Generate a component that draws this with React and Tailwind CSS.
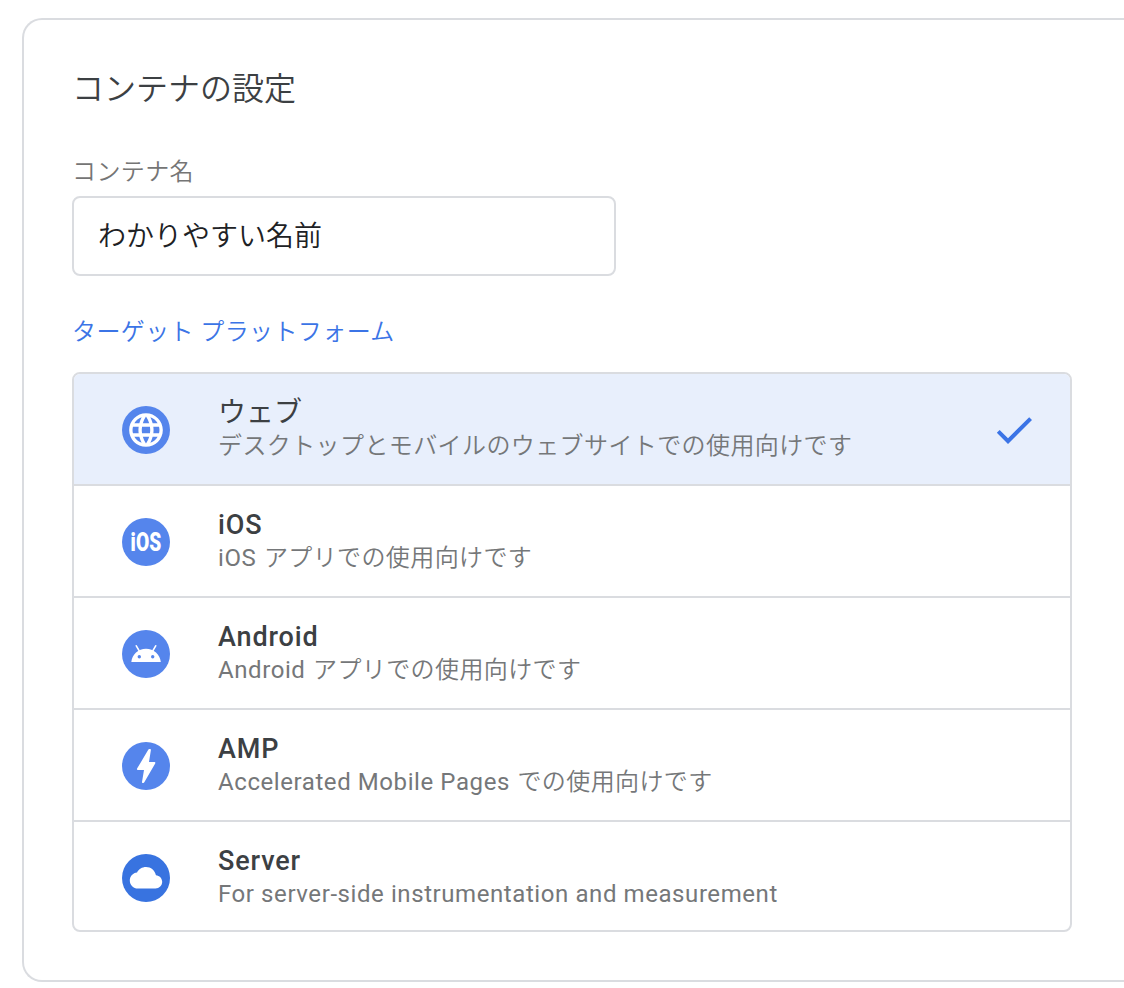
const FONT = 'font-[Roboto,"Noto_Sans_CJK_JP",sans-serif]';

function Disc({ color = 'fill-[#5585ec]', children }) {
  return (
    <svg viewBox="0 0 48 48" className="size-12 shrink-0">
      <circle cx="24" cy="24" r="24" className={color} />
      <g fill="#fff">{children}</g>
    </svg>
  );
}

const WebIcon = () => (
  <Disc>
    <path
      transform="translate(3.8 3.8) scale(1.683)"
      d="M11.99 2C6.47 2 2 6.48 2 12s4.47 10 9.99 10C17.52 22 22 17.52 22 12S17.52 2 11.99 2zm6.93 6h-2.95c-.32-1.25-.78-2.45-1.38-3.56 1.84.63 3.37 1.91 4.33 3.56zM12 4.04c.83 1.2 1.48 2.53 1.91 3.96h-3.82c.43-1.43 1.08-2.76 1.91-3.96zM4.26 14C4.1 13.36 4 12.69 4 12s.1-1.36.26-2h3.38c-.08.66-.14 1.32-.14 2s.06 1.34.14 2H4.26zm.82 2h2.95c.32 1.25.78 2.45 1.38 3.56-1.84-.63-3.37-1.9-4.33-3.56zm2.95-8H5.08c.96-1.66 2.49-2.93 4.33-3.56C8.81 5.55 8.35 6.75 8.03 8zM12 19.96c-.83-1.2-1.48-2.53-1.91-3.96h3.82c-.43 1.43-1.08 2.76-1.91 3.96zM14.34 14H9.66c-.09-.66-.16-1.32-.16-2s.07-1.35.16-2h4.68c.09.65.16 1.32.16 2s-.07 1.34-.16 2zm.25 5.56c.6-1.11 1.06-2.31 1.38-3.56h2.95c-.96 1.65-2.49 2.93-4.33 3.56zM16.36 14c.08-.66.14-1.32.14-2s-.06-1.34-.14-2h3.38c.16.64.26 1.31.26 2s-.1 1.36-.26 2h-3.38z"
    />
  </Disc>
);

const IosIcon = () => (
  <Disc>
    <text x="8.6" y="33" fontFamily="Roboto" fontWeight="900" fontSize="25" textLength="30.6" lengthAdjust="spacingAndGlyphs">
      iOS
    </text>
  </Disc>
);

const AndroidIcon = () => (
  <Disc>
    <path d="M9.300 32C10 24.500 16.300 18.700 24 18.700S38 24.500 38.800 32z" />
    <path d="M14.300 15.800l3.200 5.500M33.700 15.800l-3.200 5.500" stroke="#fff" strokeWidth="1.600" strokeLinecap="round" />
    <circle cx="17.300" cy="26.700" r="1.700" className="fill-[#5585ec]" />
    <circle cx="30.700" cy="26.700" r="1.700" className="fill-[#5585ec]" />
  </Disc>
);

const AmpIcon = () => (
  <Disc>
    <path d="M27.3 7h.8q.9 0 .8 1L27 20.1h5.6q1.1.2.6 1.300L22.300 40.300q-.4.7-1 .7h-.7q-.7-.1-.6-1L22 28h-6.200q-1.300-.2-.7-1.400L26.400 7.600q.3-.6.9-.6z" />
  </Disc>
);

const ServerIcon = () => (
  <Disc color="fill-[#3873e0]">
    <path
      transform="translate(7.8 7.6) scale(1.35)"
      d="M19.35 10.04C18.67 6.59 15.64 4 12 4 9.11 4 6.6 5.64 5.35 8.04 2.34 8.36 0 10.91 0 14c0 3.310 2.690 6 6 6h13c2.760 0 5-2.240 5-5 0-2.640-2.050-4.780-4.650-4.960z"
    />
  </Disc>
);

const PLATFORMS = [
  { name: 'ウェブ', jp: true, icon: WebIcon, selected: true, parts: ['', 'デスクトップとモバイルのウェブサイトでの使用向けです'] },
  { name: 'iOS', icon: IosIcon, parts: ['iOS ', 'アプリでの使用向けです'] },
  { name: 'Android', icon: AndroidIcon, parts: ['Android ', 'アプリでの使用向けです'] },
  { name: 'AMP', icon: AmpIcon, parts: ['Accelerated Mobile Pages ', 'での使用向けです'] },
  { name: 'Server', icon: ServerIcon, parts: ['For server-side instrumentation and measurement', ''] },
];

function PlatformRow({ name, jp, icon: Icon, selected, parts }) {
  return (
    <li className={`flex h-28 items-center border-b-2 border-[#dadce0] pl-12 pr-8 pt-0.5 last:h-[108px] last:border-b-0 last:pt-1 ${selected ? 'bg-[#e8effc]' : ''}`}>
      <Icon />
      <div className="ml-12 grow whitespace-pre">
        <div className={`h-8 leading-8 text-[#3c4043] ${jp ? 'text-[28px] font-normal' : 'text-[27px] font-medium tracking-[0.85px]'}`}>{name}</div>
        <div className="h-[34px] text-2xl leading-[34px] tracking-[0.58px] text-[#757779]">
          {parts[0]}
          <span className={`font-[350] tracking-[0.4px] ${parts[0] && parts[1] ? 'ml-px' : ''}`}>{parts[1]}</span>
        </div>
      </div>
      {selected && (
        <svg viewBox="0 0 24 24" className="size-12 shrink-0" fill="#3b74e6">
          <path d="M9 16.17L4.83 12l-1.42 1.41L9 19 21 7l-1.41-1.41z" />
        </svg>
      )}
    </li>
  );
}

export default function App() {
  return (
    <main className={`h-[988px] w-full overflow-hidden bg-white pl-[22px] pt-[18px] ${FONT}`}>
      <section className="h-[964px] rounded-l-[20px] border-2 border-r-0 border-[#dadce0] pl-12 pt-[45px]">
        <h1 className="h-12 text-[32px] font-[350] leading-[48px] text-[#3c4043]">コンテナの設定</h1>
        <label htmlFor="name" className="mt-[39px] block h-9 pt-0.5 text-2xl font-[350] leading-[36px] tracking-[0.4px] text-[#757575]">
          コンテナ名
        </label>
        <input
          id="name"
          defaultValue="わかりやすい名前"
          className="mt-2 block h-20 w-[544px] rounded-lg border-2 border-[#dadce0] pb-1 pl-6 text-[28px] font-[350] text-[#202124] outline-none"
        />
        <h2 className="mt-[38px] h-9 text-2xl font-[350] leading-9 tracking-[0.4px] text-[#3b74e6]">ターゲット プラットフォーム</h2>
        <ul className="mt-[22px] w-[1000px] overflow-hidden rounded-lg border-2 border-[#dadce0]">
          {PLATFORMS.map((p) => (
            <PlatformRow key={p.name} {...p} />
          ))}
        </ul>
      </section>
    </main>
  );
}
